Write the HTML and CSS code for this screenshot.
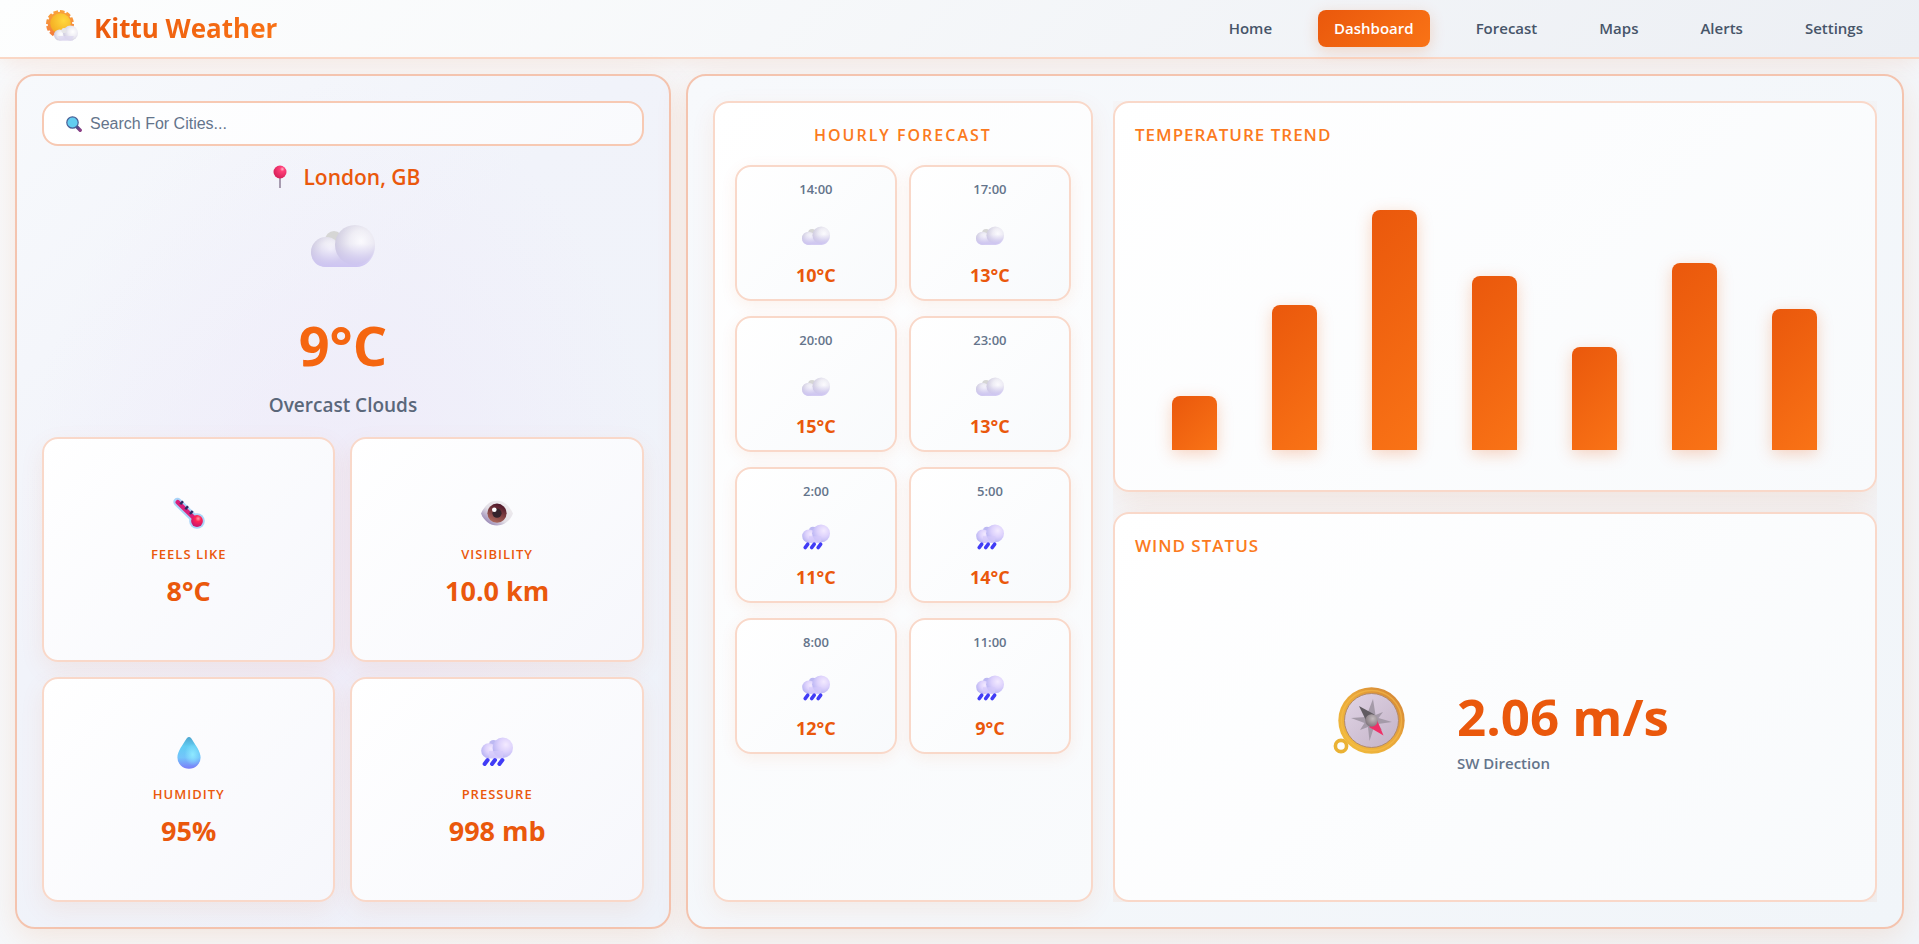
FILE: index.html
```html
<!DOCTYPE html>
<html lang="en">
<head>
<meta charset="utf-8">
<meta name="viewport" content="width=device-width, initial-scale=1">
<title>Kittu Weather</title>
<link rel="stylesheet" href="styles.css">
</head>
<body>
<svg class="sprite" aria-hidden="true">
  <defs>
    <radialGradient id="puff" cx=".65" cy=".42" r=".65"><stop offset="0" stop-color="#ffffff"/><stop offset=".45" stop-color="#f0eff5"/><stop offset="1" stop-color="#cfcbdf"/></radialGradient>
    <linearGradient id="puffBase" x1="0" y1="0" x2="0" y2="1"><stop offset="0" stop-color="#d0c8f0" stop-opacity="0"/><stop offset=".45" stop-color="#d0c8f0" stop-opacity=".1"/><stop offset="1" stop-color="#cdc4f2"/></linearGradient>
    <radialGradient id="rainPuff" cx=".65" cy=".35" r=".7"><stop offset="0" stop-color="#f3eaff"/><stop offset=".5" stop-color="#ddd2fc"/><stop offset="1" stop-color="#b9b4f3"/></radialGradient>
    <linearGradient id="sunRim" x1="0" y1="0" x2="0" y2="1"><stop offset="0" stop-color="#f9a13a"/><stop offset="1" stop-color="#f47b3c"/></linearGradient>
    <radialGradient id="sunFace" cx=".65" cy=".35" r=".75"><stop offset="0" stop-color="#ffd83d"/><stop offset="1" stop-color="#f3aa22"/></radialGradient>
    <radialGradient id="pinHead" cx=".68" cy=".28" r=".7"><stop offset="0" stop-color="#ffb3c6"/><stop offset=".25" stop-color="#ff4079"/><stop offset="1" stop-color="#d9225c"/></radialGradient>
    <radialGradient id="bulb" cx=".6" cy=".3" r=".7"><stop offset="0" stop-color="#ff9aa4"/><stop offset=".35" stop-color="#ff2456"/><stop offset="1" stop-color="#c8146e"/></radialGradient>
    <linearGradient id="eyeWhite" x1="1" y1="0" x2="0" y2="1"><stop offset="0" stop-color="#f3f1f2"/><stop offset=".55" stop-color="#e3dfe6"/><stop offset="1" stop-color="#765f9e"/></linearGradient>
    <linearGradient id="iris" x1=".7" y1="0" x2=".3" y2="1"><stop offset="0" stop-color="#4a1226"/><stop offset="1" stop-color="#b06a5c"/></linearGradient>
    <linearGradient id="dropFill" x1=".5" y1="0" x2=".5" y2="1"><stop offset="0" stop-color="#4ea6cf"/><stop offset=".3" stop-color="#62cdf3"/><stop offset=".65" stop-color="#73c4fb"/><stop offset="1" stop-color="#7a7cf8"/></linearGradient>
    <radialGradient id="dropShine" cx=".66" cy=".55" r=".35"><stop offset="0" stop-color="#8ee9ff"/><stop offset="1" stop-color="#8ee9ff" stop-opacity="0"/></radialGradient>
    <linearGradient id="brass" x1="1" y1="0" x2="0" y2="1"><stop offset="0" stop-color="#cf7f36"/><stop offset=".45" stop-color="#e9a73a"/><stop offset="1" stop-color="#f2bf3c"/></linearGradient>
    <linearGradient id="dial" x1="0" y1="0" x2="1" y2="1"><stop offset="0" stop-color="#e0d4e6"/><stop offset="1" stop-color="#c3b2c6"/></linearGradient>
    <radialGradient id="hub" cx=".6" cy=".35" r=".7"><stop offset="0" stop-color="#c3bbbd"/><stop offset="1" stop-color="#7d7279"/></radialGradient>
    <linearGradient id="handle" x1="0" y1="0" x2="1" y2="1"><stop offset="0" stop-color="#4b4a86"/><stop offset="1" stop-color="#8c3f86"/></linearGradient>
  </defs>
  <symbol id="cloud" viewBox="0 0 64 64">
    <circle cx="23" cy="25" r="9" fill="#d6d6d5"/>
    <path d="M15 24a15 15 0 0 0 0 28H46V30Z" fill="#e0ddec"/>
    <circle cx="15" cy="37" r="15" fill="url(#puff)"/>
    <circle cx="44" cy="30" r="20" fill="url(#puff)"/>
    <path d="M0 37C0 28 7 22 15 22C20 22 24 24 27 28C29 16 36 10 44 10A20 21 0 0 1 64 31C64 43 55 52 46 52H15C6 52 0 46 0 37Z" fill="url(#puffBase)"/>
  </symbol>
  <symbol id="rain" viewBox="0 0 32 32">
    <circle cx="12.500" cy="7.500" r="4.500" fill="#bdb9f2"/>
    <path d="M8 7H22V21.500H8Z" fill="#cfc6fa"/>
    <circle cx="7.700" cy="13.800" r="7.500" fill="url(#rainPuff)"/>
    <circle cx="21.800" cy="10.700" r="10.200" fill="url(#rainPuff)"/>
    <path d="M8 14H22V21H8Z" fill="#d5cbfb" opacity=".7"/>
    <path d="M6.600 23 3.600 27M14 23 11 27M21.400 23 18.400 27" stroke="#413cf6" stroke-width="4" stroke-linecap="round"/>
  </symbol>
</svg>

<header class="topbar">
  <div class="brand">
    <svg class="brand-icon" viewBox="0 0 32 32" aria-hidden="true">
      <circle cx="14" cy="14" r="12.500" fill="none" stroke="url(#sunRim)" stroke-width="3" stroke-dasharray="4.500 2"/>
      <circle cx="14" cy="14" r="12.300" fill="url(#sunRim)"/>
      <circle cx="14.500" cy="13.500" r="10.300" fill="url(#sunFace)"/>
      <path d="M8 23H27V30.500H13.500Z" fill="#ddd8f0"/>
      <circle cx="13.500" cy="25" r="5.500" fill="url(#puff)"/>
      <circle cx="24.500" cy="23" r="7.500" fill="url(#puff)"/>
      <circle cx="18" cy="20.500" r="2.600" fill="#e5e5e8"/>
      <path d="M12 26H28L25 30.500H14Z" fill="#ddd8f0" opacity=".8"/>
    </svg>
    <span class="brand-name">Kittu Weather</span>
  </div>
  <nav class="nav">
    <a class="nav-link" href="#home">Home</a>
    <a class="nav-link active" href="#dashboard" aria-current="page">Dashboard</a>
    <a class="nav-link" href="#forecast">Forecast</a>
    <a class="nav-link" href="#maps">Maps</a>
    <a class="nav-link" href="#alerts">Alerts</a>
    <a class="nav-link" href="#settings">Settings</a>
  </nav>
</header>

<main class="dashboard">
  <section class="panel current">
    <label class="search">
      <svg class="search-icon" viewBox="0 0 16 16" aria-hidden="true">
        <path d="M11 11 14.200 14.200" stroke="url(#handle)" stroke-width="3.400" stroke-linecap="round"/>
        <circle cx="6.500" cy="6.500" r="5.700" fill="#62cdf0" stroke="#4a5f96" stroke-width="1.200"/>
      </svg>
      <input class="search-input" type="text" placeholder="Search For Cities..." aria-label="Search for cities">
    </label>
    <div class="summary">
      <h1 class="place">
        <svg class="pin" viewBox="0 0 14 24" aria-hidden="true">
          <path d="M7 12V23" stroke="#a79cb0" stroke-width="2"/>
          <circle cx="7" cy="7" r="6.500" fill="url(#pinHead)"/>
        </svg>
        London, GB
      </h1>
      <svg class="summary-icon" aria-hidden="true"><use href="#cloud"/></svg>
      <p class="temperature">9°C</p>
      <p class="condition">Overcast Clouds</p>
    </div>
    <div class="metrics">
      <article class="card metric">
        <svg class="metric-icon" viewBox="0 0 32 32" aria-hidden="true">
          <path d="M4.500 5 23 23" stroke="#a9d4f8" stroke-width="8.400" stroke-linecap="round"/>
          <circle cx="24" cy="24" r="7.800" fill="#a9d4f8"/>
          <path d="M4.700 5.200 22 22" stroke="#d81f7a" stroke-width="4.400" stroke-linecap="round"/>
          <path d="M7.300 7.300 10 4.300M12.300 12.300 15 9.300M17 17 19.700 14" stroke="#2d2a63" stroke-width="2.400"/>
          <circle cx="24" cy="24" r="5.900" fill="url(#bulb)"/>
        </svg>
        <h2 class="metric-label">FEELS LIKE</h2>
        <p class="metric-value">8°C</p>
      </article>
      <article class="card metric">
        <svg class="metric-icon" viewBox="0 0 32 32" aria-hidden="true">
          <path d="M0 16.500C4 8 9 3.700 16 3.700S28 8 32 16.500C29 24 23 28.500 16 28.500S3 24 0 16.500Z" fill="url(#eyeWhite)"/>
          <circle cx="16" cy="16.200" r="9.600" fill="url(#iris)"/>
          <circle cx="16" cy="16.200" r="4.600" fill="#34232b"/>
          <circle cx="13.300" cy="12.700" r="2.300" fill="#fff"/>
        </svg>
        <h2 class="metric-label">VISIBILITY</h2>
        <p class="metric-value">10.0 km</p>
      </article>
      <article class="card metric">
        <svg class="metric-icon" viewBox="0 0 32 32" aria-hidden="true">
          <path d="M13.800 1.200Q16 -1 18.200 1.200C22 7.500 27.600 14 27.600 20.500A11.600 11.200 0 0 1 4.400 20.500C4.400 14 10 7.500 13.800 1.200Z" fill="url(#dropFill)"/>
          <path d="M13.800 1.200Q16 -1 18.200 1.200C22 7.500 27.600 14 27.600 20.500A11.600 11.200 0 0 1 4.400 20.500C4.400 14 10 7.500 13.800 1.200Z" fill="url(#dropShine)"/>
        </svg>
        <h2 class="metric-label">HUMIDITY</h2>
        <p class="metric-value">95%</p>
      </article>
      <article class="card metric">
        <svg class="metric-icon" aria-hidden="true"><use href="#rain"/></svg>
        <h2 class="metric-label">PRESSURE</h2>
        <p class="metric-value">998 mb</p>
      </article>
    </div>
  </section>

  <section class="panel details">
    <section class="card hourly">
      <h2 class="card-title centered">HOURLY FORECAST</h2>
      <div class="hours">
        <article class="card hour"><span class="hour-time">14:00</span><svg class="hour-icon" aria-hidden="true"><use href="#cloud"/></svg><span class="hour-temp">10°C</span></article>
        <article class="card hour"><span class="hour-time">17:00</span><svg class="hour-icon" aria-hidden="true"><use href="#cloud"/></svg><span class="hour-temp">13°C</span></article>
        <article class="card hour"><span class="hour-time">20:00</span><svg class="hour-icon" aria-hidden="true"><use href="#cloud"/></svg><span class="hour-temp">15°C</span></article>
        <article class="card hour"><span class="hour-time">23:00</span><svg class="hour-icon" aria-hidden="true"><use href="#cloud"/></svg><span class="hour-temp">13°C</span></article>
        <article class="card hour"><span class="hour-time">2:00</span><svg class="hour-icon" aria-hidden="true"><use href="#rain"/></svg><span class="hour-temp">11°C</span></article>
        <article class="card hour"><span class="hour-time">5:00</span><svg class="hour-icon" aria-hidden="true"><use href="#rain"/></svg><span class="hour-temp">14°C</span></article>
        <article class="card hour"><span class="hour-time">8:00</span><svg class="hour-icon" aria-hidden="true"><use href="#rain"/></svg><span class="hour-temp">12°C</span></article>
        <article class="card hour"><span class="hour-time">11:00</span><svg class="hour-icon" aria-hidden="true"><use href="#rain"/></svg><span class="hour-temp">9°C</span></article>
      </div>
    </section>
    <div class="charts">
      <section class="card trend">
        <h2 class="card-title">TEMPERATURE TREND</h2>
        <div class="bars">
          <div class="bar" style="height:54px"></div>
          <div class="bar" style="height:145px"></div>
          <div class="bar" style="height:240px"></div>
          <div class="bar" style="height:174px"></div>
          <div class="bar" style="height:103px"></div>
          <div class="bar" style="height:187px"></div>
          <div class="bar" style="height:141px"></div>
        </div>
      </section>
      <section class="card wind">
        <h2 class="card-title">WIND STATUS</h2>
        <div class="wind-body">
          <svg class="compass" viewBox="0 0 72 68" aria-hidden="true">
            <circle cx="8" cy="59" r="5.600" fill="none" stroke="#eab234" stroke-width="3.600"/>
            <circle cx="38.500" cy="33.500" r="33.200" fill="url(#brass)"/>
            <circle cx="38.500" cy="33.500" r="30" fill="none" stroke="#f6bd4b" stroke-width="1.500" opacity=".6"/>
            <circle cx="38.500" cy="33.500" r="27" fill="url(#dial)" stroke="#b38a6a" stroke-width="1"/>
            <path d="M40 12 42.500 28 50 25 45.500 31 59 35 45 37 49 43 41 40 36.500 54 35 40 27 43 31.500 36 18 31 33 30Z" fill="#a49aa8"/>
            <path d="M26 19 41.500 27.500 33.500 34.500Z" fill="#605b61"/>
            <path d="M50.500 48.500 44 33 36 40Z" fill="#ef2f67"/>
            <circle cx="38.500" cy="33.500" r="6.200" fill="url(#hub)"/>
          </svg>
          <div class="wind-text">
            <p class="wind-speed">2.06 m/s</p>
            <p class="wind-direction">SW Direction</p>
          </div>
        </div>
      </section>
    </div>
  </section>
</main>
</body>
</html>
```

FILE: styles.css
```css
:root {
  --orange-deep: #ea580c;
  --orange: #f97316;
  --slate: #475569;
  --slate-light: #64748b;
  --line: #f9d8c9;
  --line-strong: #f4c4af;
  --flame: linear-gradient(135deg, #ea580c, #f97316);
}

* { box-sizing: border-box; }

body {
  margin: 0;
  min-height: 100vh;
  display: flex;
  flex-direction: column;
  font-family: "Segoe UI", "Open Sans", sans-serif;
  color: var(--slate);
  background: linear-gradient(135deg, #f8fafc, #f1f5f9);
}

h1, h2, p { margin: 0; }

.sprite { position: absolute; width: 0; height: 0; }

.topbar {
  display: flex;
  align-items: center;
  justify-content: space-between;
  padding: 10px 40px;
  border-bottom: 2px solid #fad7c5;
  background: linear-gradient(135deg, #fdfefe, #eceff4);
  box-shadow: 0 4px 20px rgba(234, 88, 12, .1);
}

.brand { display: flex; align-items: flex-start; gap: 16px; padding-left: 6px; }
.brand-icon { width: 32px; height: 32px; }
.brand-name {
  font-size: 26px;
  font-weight: 700;
  line-height: 37px;
  color: transparent;
  background: var(--flame);
  background-clip: text;
  -webkit-background-clip: text;
}

.nav { display: flex; gap: 30px; }
.nav-link {
  padding: 8px 16px;
  border-radius: 8px;
  font-size: 15px;
  font-weight: 600;
  line-height: 21px;
  color: var(--slate);
  text-decoration: none;
}
.nav-link.active {
  color: #fff;
  background: var(--flame);
  box-shadow: 0 4px 15px rgba(234, 88, 12, .2);
}

.dashboard {
  flex: 1;
  display: grid;
  grid-template-columns: 35fr 65fr;
  gap: 15px;
  padding: 15px;
}

.panel {
  padding: 25px;
  border: 2px solid var(--line-strong);
  border-radius: 20px;
  box-shadow: 0 8px 32px rgba(234, 88, 12, .12);
}

.current {
  display: flex;
  flex-direction: column;
  background:
    radial-gradient(ellipse at 50% 55%, rgba(238, 232, 249, .7), rgba(238, 236, 250, 0) 70%),
    linear-gradient(135deg, #f7f9fc, #f1f3fa 40%, #eef2f9);
}

.search {
  display: flex;
  align-items: center;
  gap: 8px;
  height: 45px;
  padding: 0 22px;
  border: 2px solid #f7c9b3;
  border-radius: 16px;
  background: linear-gradient(135deg, #ffffff, #f9fafd);
}
.search-icon { width: 16px; height: 16px; flex: none; }
.search-input {
  flex: 1;
  min-width: 0;
  padding: 0;
  border: 0;
  outline: 0;
  background: none;
  font: 16px "Liberation Sans", Arial, sans-serif;
  color: var(--slate);
}
.search-input::placeholder { color: var(--slate-light); opacity: 1; }

.summary {
  display: flex;
  flex-direction: column;
  align-items: center;
  padding: 16px 0 19px;
}
.place {
  display: flex;
  align-items: center;
  gap: 16px;
  padding-left: 8px;
  font-size: 21px;
  font-weight: 600;
  line-height: 30px;
  color: var(--orange-deep);
}
.pin { width: 14px; height: 24px; }
.summary-icon { width: 64px; height: 64px; margin-top: 23px; }
.temperature {
  margin-top: 28px;
  font-size: 54px;
  font-weight: 700;
  line-height: 76px;
  color: #f56610;
}
.condition { margin-top: 9px; font-size: 19px; font-weight: 600; line-height: 26px; color: #5a677a; }

.card {
  border: 2px solid var(--line);
  border-radius: 16px;
  background: linear-gradient(135deg, #ffffff, #f8fafc);
  box-shadow: 0 8px 24px rgba(234, 88, 12, .08);
}

.metrics {
  flex: 1;
  display: grid;
  grid-template-columns: 1fr 1fr;
  grid-auto-rows: 1fr;
  gap: 15px;
}
.metric {
  display: flex;
  flex-direction: column;
  align-items: center;
  justify-content: center;
  padding-top: 8px;
  background: linear-gradient(135deg, #ffffff, #f6f7fc);
}
.metric-icon { width: 32px; height: 32px; }
.metric-label {
  margin-top: 16px;
  font-size: 13px;
  font-weight: 600;
  letter-spacing: 1px;
  line-height: 18px;
  color: var(--orange-deep);
}
.metric-value { margin-top: 9px; font-size: 27px; font-weight: 700; line-height: 38px; color: var(--orange-deep); }

.details {
  display: grid;
  grid-template-columns: 380px 1fr;
  gap: 20px;
  background: linear-gradient(135deg, #f7f9fc, #f1f5f9);
}

.card-title { font-size: 17px; font-weight: 600; letter-spacing: 1px; line-height: 24px; color: #fb7a20; }
.card-title.centered { font-size: 16px; text-align: center; letter-spacing: 2px; }

.hourly { padding: 20px; }
.hours { display: grid; grid-template-columns: 1fr 1fr; gap: 15px 12px; margin-top: 18px; }
.hour {
  display: flex;
  flex-direction: column;
  align-items: center;
  padding: 12px 12px 16px;
  box-shadow: 0 4px 16px rgba(234, 88, 12, .08);
}
.hour-time { font-size: 13px; font-weight: 600; line-height: 20px; color: var(--slate-light); }
.hour-icon { width: 28px; height: 28px; margin: 23px 0 17px; }
.hour-temp { font-size: 18px; font-weight: 700; line-height: 16px; color: var(--orange-deep); }

.charts {
  display: grid;
  grid-template-rows: 1fr 1fr;
  gap: 20px;
  overflow: hidden;
}
.trend, .wind {
  display: flex;
  flex-direction: column;
  padding: 20px;
  box-shadow: 0 8px 32px rgba(234, 88, 12, .12);
}
.bars { flex: 1; display: flex; align-items: flex-end; justify-content: space-around; padding: 20px 10px; }
.bar {
  width: 45px;
  border-radius: 8px 8px 0 0;
  background: var(--flame);
  box-shadow: 0 4px 16px rgba(234, 88, 12, .25);
}

.wind-body {
  flex: 1;
  display: flex;
  align-items: center;
  justify-content: center;
  gap: 52px;
  padding: 4px 0 0 12px;
}
.compass { width: 72px; height: 68px; }
.wind-text { padding-top: 16px; }
.wind-speed { font-size: 51px; font-weight: 700; line-height: 64px; color: var(--orange-deep); }
.wind-direction { margin-top: 4px; font-size: 15px; font-weight: 600; line-height: 22px; color: var(--slate-light); }
```
